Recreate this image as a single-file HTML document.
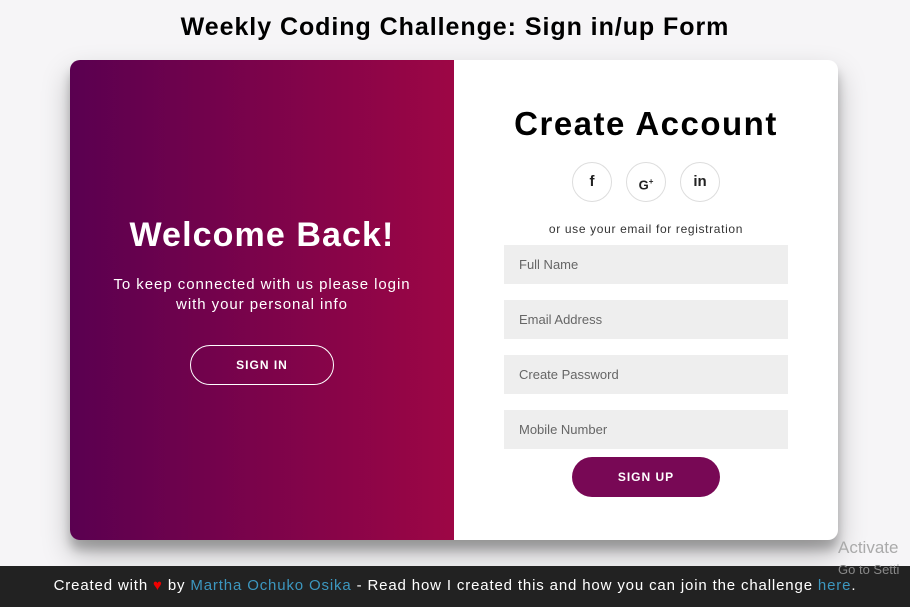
<!DOCTYPE html>
<html><head><style>
*{box-sizing:border-box;margin:0;padding:0}
body{width:910px;height:607px;background:#f6f5f7;font-family:"Liberation Sans",sans-serif;position:relative;overflow:hidden}
h2{position:absolute;top:13px;left:0;width:910px;text-align:center;font-size:25px;font-weight:bold;color:#000;letter-spacing:.95px}
.card{position:absolute;left:70px;top:60px;width:768px;height:480px;background:#fff;border-radius:10px;box-shadow:0 14px 28px rgba(0,0,0,.25),0 10px 10px rgba(0,0,0,.22);overflow:hidden}
.left{position:absolute;left:0;top:0;width:384px;height:480px;background:linear-gradient(to right,#5a0050,#9d0645);color:#fff;text-align:center}
.left h1{position:absolute;top:156px;width:100%;font-size:34px;font-weight:bold;letter-spacing:1.1px}
.left p{position:absolute;top:215px;left:20px;width:344px;font-size:15px;line-height:20px;letter-spacing:.95px}
.ghost{position:absolute;left:120px;top:285px;width:144px;height:40px;border:1px solid #fff;border-radius:20px;font-size:12px;font-weight:bold;letter-spacing:1px;line-height:38px}
.right{position:absolute;left:384px;top:0;width:384px;height:480px;text-align:center}
.right h1{position:absolute;top:45px;width:100%;font-size:33px;font-weight:bold;letter-spacing:1.5px}
.soc{position:absolute;top:102px;width:40px;height:40px;border:1px solid #ddd;border-radius:50%;font-weight:bold;font-size:15px;line-height:38px;color:#222}
.or{position:absolute;top:162px;width:100%;font-size:12px;color:#333;letter-spacing:.65px}
.in{position:absolute;left:50px;width:284px;height:39px;background:#eee;font-size:13px;color:#666;text-align:left;padding-left:15px;line-height:39px}
.btn{position:absolute;left:118px;top:397px;width:148px;height:40px;border-radius:20px;background:#780855;color:#fff;font-size:12px;font-weight:bold;letter-spacing:1px;line-height:40px}
.foot{position:absolute;left:0;top:566px;width:910px;height:41px;background:#222;color:#fff;text-align:center;font-size:15px;line-height:40px;letter-spacing:.85px;white-space:nowrap}
.foot a{color:#3c97bf}
.act{position:absolute;left:838px;top:538px;color:#aaa;font-size:17px}
.act2{position:absolute;left:838px;top:562px;color:#888;font-size:13px;z-index:2}
</style></head><body>
<h2>Weekly Coding Challenge: Sign in/up Form</h2>
<div class="card">
<div class="left"><h1>Welcome Back!</h1><p>To keep connected with us please login<br>with your personal info</p><div class="ghost">SIGN IN</div></div>
<div class="right"><h1>Create Account</h1>
<div class="soc" style="left:118px">f</div><div class="soc" style="left:172px;font-size:13px">G<sup style="font-size:8px">+</sup></div><div class="soc" style="left:226px">in</div>
<div class="or">or use your email for registration</div>
<div class="in" style="top:185px">Full Name</div>
<div class="in" style="top:240px">Email Address</div>
<div class="in" style="top:295px">Create Password</div>
<div class="in" style="top:350px">Mobile Number</div>
<div class="btn">SIGN UP</div></div>
</div>
<div class="act">Activate</div>
<div class="foot">Created with <span style="color:#e00">&#9829;</span> by <a>Martha Ochuko Osika</a> - Read how I created this and how you can join the challenge <a>here</a>.</div>
<div class="act2">Go to Setti</div>
</body></html>
